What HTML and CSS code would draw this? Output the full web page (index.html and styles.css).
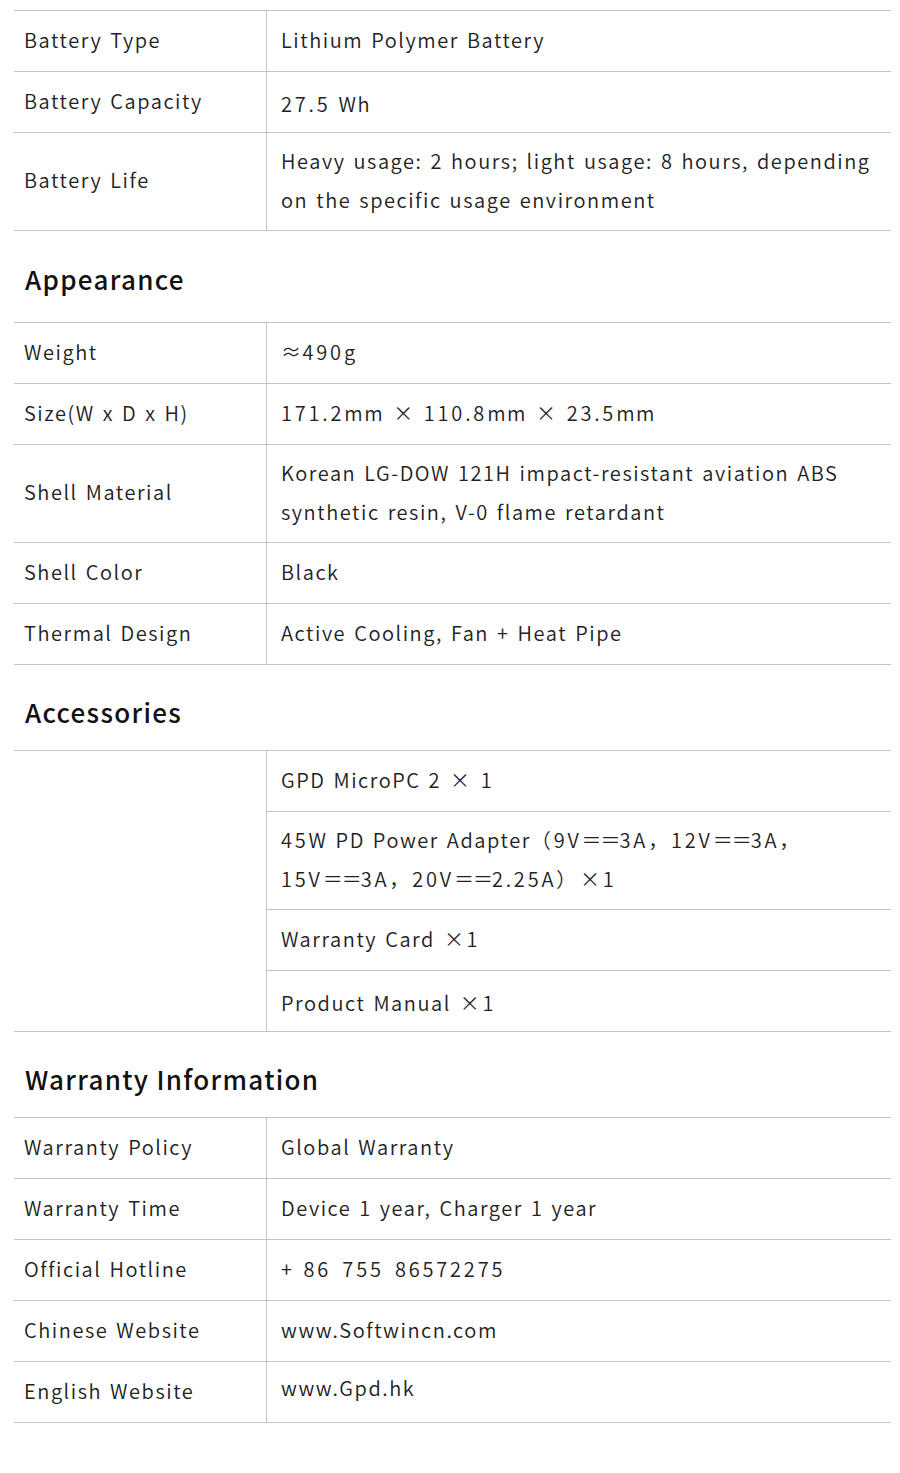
FILE: index.html
```html
<!DOCTYPE html>
<html>
<head>
<meta charset="utf-8">
<link rel="stylesheet" href="styles.css">
</head>
<body>
<div class="page">
  <table class="spec">
    <tr><td class="k">Battery Type</td><td class="v">Lithium Polymer Battery</td></tr>
    <tr><td class="k">Battery Capacity</td><td class="v low"><span class="num">27.5</span> Wh</td></tr>
    <tr class="tall"><td class="k">Battery Life</td><td class="v">Heavy usage: 2 hours; light usage: 8 hours, depending on the specific usage environment</td></tr>
  </table>

  <h2 class="section first">Appearance</h2>
  <table class="spec">
    <tr><td class="k">Weight</td><td class="v">≈<span class="num">490</span>g</td></tr>
    <tr><td class="k">Size(W x D x H)</td><td class="v"><span class="num">171.2</span>mm <span class="mul">×</span> <span class="num">110.8</span>mm <span class="mul">×</span> <span class="num">23.5</span>mm</td></tr>
    <tr class="tall"><td class="k">Shell Material</td><td class="v">Korean LG-DOW 121H impact-resistant aviation ABS synthetic resin, V-0 flame retardant</td></tr>
    <tr><td class="k">Shell Color</td><td class="v">Black</td></tr>
    <tr><td class="k">Thermal Design</td><td class="v">Active Cooling, Fan + Heat Pipe</td></tr>
  </table>

  <h2 class="section">Accessories</h2>
  <table class="spec">
    <tr><td class="k" rowspan="4"></td><td class="v">GPD MicroPC 2 <span class="mul">×</span> 1</td></tr>
    <tr class="tall"><td class="v"><span class="num">45</span>W PD Power Adapter<span class="num"><span class="grp">（9V<span class="eq">＝＝</span>3A，</span><span class="grp">12V<span class="eq">＝＝</span>3A，</span><span class="grp">15V<span class="eq">＝＝</span>3A，</span><span class="grp">20V<span class="eq">＝＝</span>2.25A）</span></span><span class="mul">×</span>1</td></tr>
    <tr><td class="v">Warranty Card <span class="mul">×</span>1</td></tr>
    <tr><td class="v low">Product Manual <span class="mul">×</span>1</td></tr>
  </table>

  <h2 class="section">Warranty Information</h2>
  <table class="spec">
    <tr><td class="k">Warranty Policy</td><td class="v">Global Warranty</td></tr>
    <tr><td class="k">Warranty Time</td><td class="v">Device 1 year, Charger 1 year</td></tr>
    <tr><td class="k">Official Hotline</td><td class="v"><span class="phone">+ <span class="num">86 755 86572275</span></span></td></tr>
    <tr><td class="k">Chinese Website</td><td class="v">www.Softwincn.com</td></tr>
    <tr><td class="k">English Website</td><td class="v high">www.Gpd.hk</td></tr>
  </table>
</div>
</body>
</html>
```

FILE: styles.css
```css
html, body {
  margin: 0;
  padding: 0;
  background: #ffffff;
}

.page {
  width: 877px;
  padding: 10px 0 50px 14px;
  font-family: "Noto Sans CJK JP", "Noto Sans", sans-serif;
  color: #222222;
}

.spec {
  width: 100%;
  border-collapse: collapse;
  table-layout: fixed;
}

.spec tr {
  height: 61px;
}

.spec tr.tall {
  height: 98px;
}

.spec td {
  border-top: 1px solid #c4c4c4;
  border-bottom: 1px solid #c4c4c4;
  font-size: 20px;
  font-weight: 350;
  line-height: 39px;
  letter-spacing: 1.55px;
  word-spacing: 2px;
  vertical-align: middle;
  padding: 0 0 4px 0;
}

.spec td.k {
  width: 242px;
  padding-left: 10px;
  border-right: 1px solid #c4c4c4;
}

.spec td.v {
  padding-left: 14px;
  padding-right: 10px;
}

.spec td.low {
  padding-top: 7px;
}

.spec td.high {
  padding-bottom: 10px;
}

.num {
  letter-spacing: 2.8px;
}

.grp {
  white-space: nowrap;
}

.phone {
  word-spacing: 4px;
}

.mul {
  padding: 0 1px;
}

.eq {
  letter-spacing: -1px;
}

.section {
  margin: 0;
  padding: 31px 0 22px 11px;
  font-size: 26px;
  line-height: 32px;
  font-weight: 500;
  letter-spacing: 1.3px;
  color: #111111;
}

.section.first {
  padding-top: 32px;
  padding-bottom: 27px;
}
```
